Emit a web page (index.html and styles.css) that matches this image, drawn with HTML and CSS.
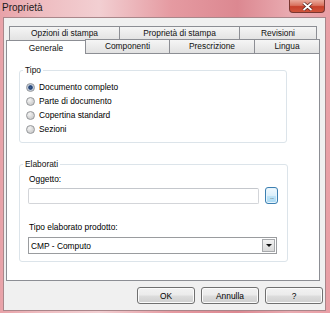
FILE: index.html
```html
<!DOCTYPE html>
<html lang="it">
<head>
<meta charset="UTF-8">
<meta name="viewport" content="width=device-width, initial-scale=1.0">
<title>Proprietà</title>
<link rel="stylesheet" href="styles.css">
</head>
<body>

<div class="window">
  <div class="titlebar">
    <span class="title">Proprietà</span>
    <span class="close-btn">
      <svg width="11" height="9" viewBox="0 0 11 9"><path d="M1.5 1 L9.5 8 M9.5 1 L1.5 8" stroke="#4a1c18" stroke-width="3.2"/><path d="M1.5 1 L9.5 8 M9.5 1 L1.5 8" stroke="#fff" stroke-width="1.8"/></svg>
    </span>
  </div>

  <div class="client">
    <div class="tabctl">
      <div class="tab-row back">
        <div class="tab w-opzioni">Opzioni di stampa</div>
        <div class="tab w-proprieta">Proprietà di stampa</div>
        <div class="tab w-revisioni">Revisioni</div>
      </div>
      <div class="tab-row front">
        <div class="tab selected w-generale">Generale</div>
        <div class="tab w-componenti">Componenti</div>
        <div class="tab w-prescrizione">Prescrizione</div>
        <div class="tab w-lingua">Lingua</div>
      </div>

      <div class="panel">
        <fieldset class="group">
          <legend>Tipo</legend>
          <div class="group-body tipo">
            <label class="radio"><input type="radio" name="tipo" checked>Documento completo</label>
            <label class="radio"><input type="radio" name="tipo">Parte di documento</label>
            <label class="radio"><input type="radio" name="tipo">Copertina standard</label>
            <label class="radio"><input type="radio" name="tipo">Sezioni</label>
          </div>
        </fieldset>

        <fieldset class="group elaborati">
          <legend>Elaborati</legend>
          <div class="group-body">
            <div class="field-label">Oggetto:</div>
            <div class="input-row">
              <div class="text-input"></div>
              <div class="browse-btn">...</div>
            </div>
            <div class="field-label second">Tipo elaborato prodotto:</div>
            <div class="select">
              <span class="select-value">CMP - Computo</span>
              <span class="select-arrow"><span class="triangle"></span></span>
            </div>
          </div>
        </fieldset>
      </div>
    </div>

    <div class="buttons">
      <button type="button" class="btn">OK</button>
      <button type="button" class="btn">Annulla</button>
      <button type="button" class="btn">?</button>
    </div>
  </div>
</div>

</body>
</html>
```

FILE: styles.css
```css
body {
  margin: 0;
  font-family: "Liberation Sans", Arial, sans-serif;
  font-size: 8.4px;
  color: #000;
  background: #e9a3a9;
}

.window {
  width: 330px;
  height: 313px;
  display: flex;
  flex-direction: column;
  box-sizing: border-box;
  background: linear-gradient(to right, #e8a2a8 0%, #eebcc0 12%, #f2cfd2 30%, #e59aa1 52%, #dc8891 72%, #e9abb1 88%, #e99ea5 100%);
}

/* Title bar */
.titlebar {
  height: 17px;
  flex: none;
  display: flex;
  justify-content: space-between;
  align-items: flex-start;
  padding: 0 5px 0 2px;
}

.title {
  font-size: 10px;
  line-height: 16px;
  color: #1a1a1a;
}

.close-btn {
  width: 36px;
  height: 13px;
  box-sizing: border-box;
  display: flex;
  align-items: center;
  justify-content: center;
  border: 1px solid #7a3630;
  border-top: none;
  border-radius: 0 0 4px 4px;
  background: linear-gradient(to bottom, #eaa99b 0%, #d9735f 45%, #c7402a 55%, #d0553c 100%);
}

/* Client area */
.client {
  flex: 1;
  display: flex;
  flex-direction: column;
  margin: 0 4px 2px 3px;
  border: 1px solid #a9868a;
  background-color: #f0f0f0;
  padding: 8px 0 0 2px;
}

.tabctl {
  flex: 1;
  display: flex;
  flex-direction: column;
  width: 314px;
}

.tab-row {
  display: flex;
  flex: none;
}

.tab-row.back {
  height: 14px;
  margin-left: 3px;
}

.tab-row.front {
  height: 13px;
  align-items: flex-end;
}

.tab {
  box-sizing: border-box;
  height: 100%;
  border: 1px solid #8c8e94;
  border-bottom: none;
  background: linear-gradient(to bottom, #f5f5f5, #e2e2e2);
  text-align: center;
  line-height: 12px;
  white-space: nowrap;
  color: #111;
}

.tab + .tab {
  margin-left: -1px;
}

.tab-row.front .tab {
  height: 14px;
  line-height: 12px;
}

.tab.selected {
  position: relative;
  z-index: 2;
  height: 17px;
  margin-bottom: -1px;
  background: #fff;
  line-height: 12px;
  padding-top: 1px;
}

.w-opzioni { width: 111px; }
.w-proprieta { width: 121px; }
.w-revisioni { width: 78px; }
.w-generale { width: 80px; }
.w-componenti { width: 85px; }
.w-prescrizione { width: 86px; }
.w-lingua { width: 66px; }

.panel {
  flex: 1;
  position: relative;
  z-index: 1;
  background-color: #fff;
  border: 1px solid #8c8e94;
  padding: 11px 0 0 12px;
}

/* Group boxes */
.group {
  box-sizing: border-box;
  width: 268px;
  margin: 0;
  padding: 0;
  border: 1px solid #dce4ea;
  border-radius: 3px;
}

.group legend {
  margin-left: 3px;
  padding: 0 2px;
  line-height: 10px;
  color: #111;
}

.group.elaborati {
  margin-top: 16px;
}

.group-body {
  padding: 4px 9px 7px 8px;
}

.group-body.tipo {
  padding: 5px 0 6px 6px;
}

.radio {
  display: flex;
  align-items: center;
  height: 14px;
  gap: 4px;
}

.radio input {
  -webkit-appearance: none;
  appearance: none;
  margin: 0;
  width: 9px;
  height: 9px;
  border: 1px solid #95979a;
  border-radius: 50%;
  background: radial-gradient(circle at 35% 30%, #f4f4f4 0, #d6d6d6 55%, #c4c4c4 100%);
}

.radio input:checked {
  background: radial-gradient(circle, #3a5d91 0, #1c3b6e 1.8px, #b9c6d8 2.6px, #d8dde4 100%);
}

.field-label {
  line-height: 12px;
  padding-left: 1px;
  margin-bottom: 2px;
}

.field-label.second {
  margin-top: 17px;
  margin-bottom: 4px;
}

.input-row {
  display: flex;
  align-items: center;
  gap: 6px;
}

.text-input {
  box-sizing: border-box;
  width: 231px;
  height: 16px;
  border: 1px solid #d3d5d9;
  border-top-color: #c4c7cc;
  border-radius: 2px;
  background: #fff;
}

.browse-btn {
  box-sizing: border-box;
  width: 13px;
  height: 17px;
  border: 1px solid #3c7fb1;
  border-radius: 3px;
  background: linear-gradient(to bottom, #f1f9fe 0%, #dcf0fb 50%, #bfe4f8 55%, #a9d9f4 100%);
  box-shadow: inset 0 0 0 1px #e6f4fc;
  color: #7a8a94;
  font-size: 8px;
  line-height: 18px;
  text-align: center;
  letter-spacing: -1px;
}

.select {
  box-sizing: border-box;
  width: 249px;
  height: 17px;
  display: flex;
  align-items: center;
  justify-content: space-between;
  border: 1px solid #9a9c9f;
  background: #fff;
  padding: 0 1px 0 2px;
}

.select-arrow {
  box-sizing: border-box;
  width: 13px;
  height: 13px;
  display: flex;
  align-items: center;
  justify-content: center;
  border: 1px solid #a7a9ac;
  background: linear-gradient(to bottom, #f2f2f2, #d9d9d9);
}

.triangle {
  width: 0;
  height: 0;
  border-left: 3px solid transparent;
  border-right: 3px solid transparent;
  border-top: 3px solid #111;
}

/* Dialog buttons */
.buttons {
  flex: none;
  display: flex;
  justify-content: flex-end;
  gap: 6px;
  margin: 6px 2px 6px 0;
}

.btn {
  box-sizing: border-box;
  width: 58px;
  height: 17px;
  padding: 0;
  font-family: "Liberation Sans", Arial, sans-serif;
  font-size: 8.4px;
  color: #000;
  border: 1px solid #707070;
  border-radius: 3px;
  background: linear-gradient(to bottom, #f2f2f2 0%, #ebebeb 49%, #dddddd 51%, #cfcfcf 100%);
  box-shadow: inset 0 0 0 1px #fbfbfb;
}
```
